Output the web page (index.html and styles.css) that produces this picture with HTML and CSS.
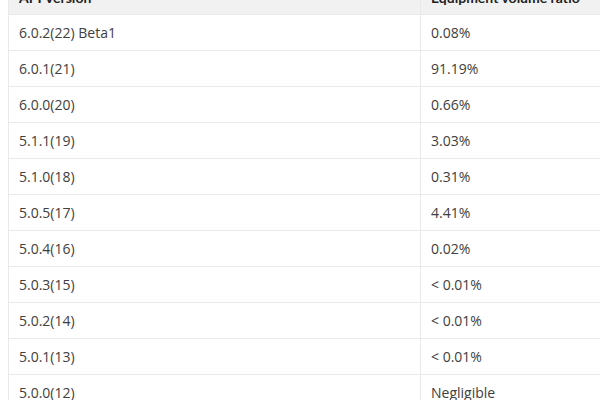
FILE: index.html
```html
<!DOCTYPE html>
<html>
<head>
<meta charset="utf-8">
<link rel="stylesheet" href="styles.css">
</head>
<body>
<div class="wrap">
<table class="tbl">
<thead>
<tr><th class="c1">API Version</th><th class="c2">Equipment volume ratio</th></tr>
</thead>
<tbody>
<tr><td>6.0.2(22) Beta1</td><td>0.08%</td></tr>
<tr><td>6.0.1(21)</td><td>91.19%</td></tr>
<tr><td>6.0.0(20)</td><td>0.66%</td></tr>
<tr><td>5.1.1(19)</td><td>3.03%</td></tr>
<tr><td>5.1.0(18)</td><td>0.31%</td></tr>
<tr><td>5.0.5(17)</td><td>4.41%</td></tr>
<tr><td>5.0.4(16)</td><td>0.02%</td></tr>
<tr><td>5.0.3(15)</td><td>&lt; 0.01%</td></tr>
<tr><td>5.0.2(14)</td><td>&lt; 0.01%</td></tr>
<tr><td>5.0.1(13)</td><td>&lt; 0.01%</td></tr>
<tr><td>5.0.0(12)</td><td>Negligible</td></tr>
</tbody>
</table>
</div>
</body>
</html>
```
FILE: styles.css
```css
html, body { margin: 0; padding: 0; background: #fff; overflow: hidden; }
.wrap { padding-left: 8px; margin-top: -22px; }
.tbl {
  border-collapse: collapse;
  table-layout: fixed;
  width: 640px;
  font-family: "Open Sans", "Noto Sans", sans-serif;
  font-size: 14px;
  color: #404040;
}
.tbl th, .tbl td {
  height: 36px;
  box-sizing: border-box;
  padding: 0 10px;
  text-align: left;
  border: 1px solid #e9e9e9;
  vertical-align: middle;
}
.tbl th {
  background: #f1f1f1;
  font-family: Lato, "Open Sans", sans-serif;
  font-weight: 700;
  font-size: 14px;
  color: #222;
  padding-top: 2px;
}
.c1 { width: 412px; }
.c2 { width: 228px; }
```
